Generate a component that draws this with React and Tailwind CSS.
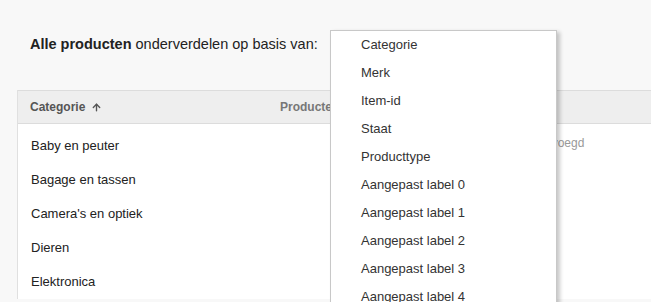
import { ArrowUp } from 'lucide-react'

const options = [
  'Categorie',
  'Merk',
  'Item-id',
  'Staat',
  'Producttype',
  'Aangepast label 0',
  'Aangepast label 1',
  'Aangepast label 2',
  'Aangepast label 3',
  'Aangepast label 4',
]

const rows = [
  { name: 'Baby en peuter', status: 'Toegevoegd' },
  { name: 'Bagage en tassen' },
  { name: "Camera's en optiek" },
  { name: 'Dieren' },
  { name: 'Elektronica' },
]

export default function App() {
  return (
    <div
      className="relative h-[302px] w-[651px] overflow-hidden bg-[#f8f8f8] text-[#222]"
      style={{ fontFamily: '"Liberation Sans", Arial, sans-serif' }}
    >
      <div className="pl-[30px] pt-[35px] text-[14.5px] leading-[18px]">
        <span className="font-bold">Alle producten</span> onderverdelen op basis van:
      </div>

      <div className="ml-[17px] mt-[37px] border-l border-[#e0e0e0] bg-white">
        <div className="flex h-[34px] items-center border-y border-[#dcdcdc] bg-[#eeeeee] text-[12px] font-bold text-[#555]">
          <div className="flex w-[262px] items-center gap-[6px] pl-[12px]">
            Categorie <ArrowUp size={11} strokeWidth={3} />
          </div>
          <div className="text-[#777]">Producten</div>
        </div>
        <div className="pt-[5px] text-[13px]">
          {rows.map((r) => (
            <div key={r.name} className="flex h-[34px] items-center">
              <div className="w-[501px] pl-[13px]">{r.name}</div>
              {r.status && <div className="-mt-[6px] text-[12px] text-[#999]">{r.status}</div>}
            </div>
          ))}
        </div>
      </div>

      <div className="absolute left-[330px] top-[30px] w-[227px] border border-[#c8c8c8] bg-white shadow-[3px_2px_4px_rgba(0,0,0,0.22)]">
        {options.map((o) => (
          <div key={o} className="flex h-[28px] items-center pl-[30px] text-[13px] text-[#333]">
            {o}
          </div>
        ))}
      </div>
    </div>
  )
}
